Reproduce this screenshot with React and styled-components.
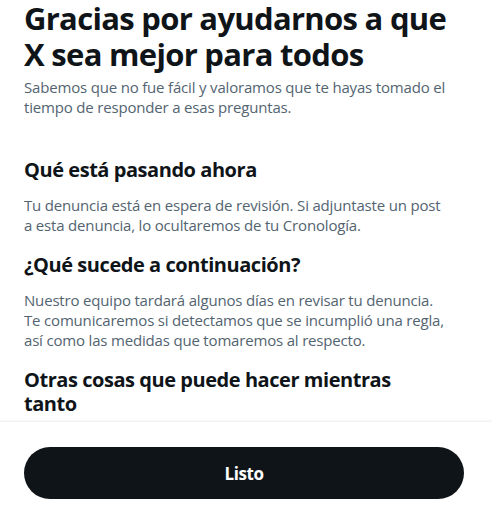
import React from "react";
import styled, { createGlobalStyle } from "styled-components";

const GlobalStyle = createGlobalStyle`
  html, body {
    margin: 0;
    padding: 0;
    background: #ffffff;
  }
  body {
    font-family: "Open Sans", "Noto Sans", "Liberation Sans", sans-serif;
    -webkit-font-smoothing: antialiased;
  }
`;

const Sheet = styled.div`
  width: 492px;
  height: 512px;
  display: flex;
  flex-direction: column;
  background: #ffffff;
  overflow: hidden;
`;

const Body = styled.div`
  flex: 1;
  min-height: 0;
  overflow: hidden;
  padding: 0 42px 0 24px;
`;

const Title = styled.h1`
  margin: 0;
  font-size: 31px;
  line-height: 36px;
  font-weight: 700;
  letter-spacing: -0.7px;
  color: #0f1419;
`;

const Lead = styled.p`
  margin: 5px 0 0;
  font-size: 15px;
  line-height: 20px;
  letter-spacing: -0.18px;
  color: #536471;
`;

const Section = styled.section`
  margin-top: ${(props) => (props.$first ? "41px" : "18px")};
`;

const SectionTitle = styled.h2`
  margin: 0;
  padding-right: 8px;
  font-size: 20px;
  line-height: 24px;
  font-weight: 700;
  letter-spacing: -0.45px;
  color: #0f1419;
`;

const SectionText = styled.p`
  margin: 13px 0 0;
  font-size: 15px;
  line-height: 20px;
  letter-spacing: -0.18px;
  color: #536471;
`;

const Footer = styled.div`
  flex-shrink: 0;
  padding: 25px 28px 13px 24px;
  border-top: 1px solid #eff3f4;
  box-shadow: 0 -1px 2px rgba(15, 20, 25, 0.04);
`;

const DoneButton = styled.button`
  display: block;
  width: 100%;
  height: 52px;
  border: none;
  border-radius: 9999px;
  background: #0f1419;
  color: #ffffff;
  font-family: inherit;
  font-size: 17px;
  font-weight: 700;
  letter-spacing: -0.4px;
  cursor: pointer;
`;

const sections = [
  {
    title: "Qué está pasando ahora",
    text: "Tu denuncia está en espera de revisión. Si adjuntaste un post a esta denuncia, lo ocultaremos de tu Cronología.",
  },
  {
    title: "¿Qué sucede a continuación?",
    text: "Nuestro equipo tardará algunos días en revisar tu denuncia. Te comunicaremos si detectamos que se incumplió una regla, así como las medidas que tomaremos al respecto.",
  },
  {
    title: "Otras cosas que puede hacer mientras tanto",
  },
];

const App = () => {
  return (
    <>
      <GlobalStyle />
      <Sheet>
        <Body>
          <Title>Gracias por ayudarnos a que X sea mejor para todos</Title>
          <Lead>
            Sabemos que no fue fácil y valoramos que te hayas tomado el tiempo
            de responder a esas preguntas.
          </Lead>
          {sections.map((s, i) => (
            <Section key={s.title} $first={i === 0}>
              <SectionTitle>{s.title}</SectionTitle>
              {s.text && <SectionText>{s.text}</SectionText>}
            </Section>
          ))}
        </Body>
        <Footer>
          <DoneButton>Listo</DoneButton>
        </Footer>
      </Sheet>
    </>
  );
};

export default App;
